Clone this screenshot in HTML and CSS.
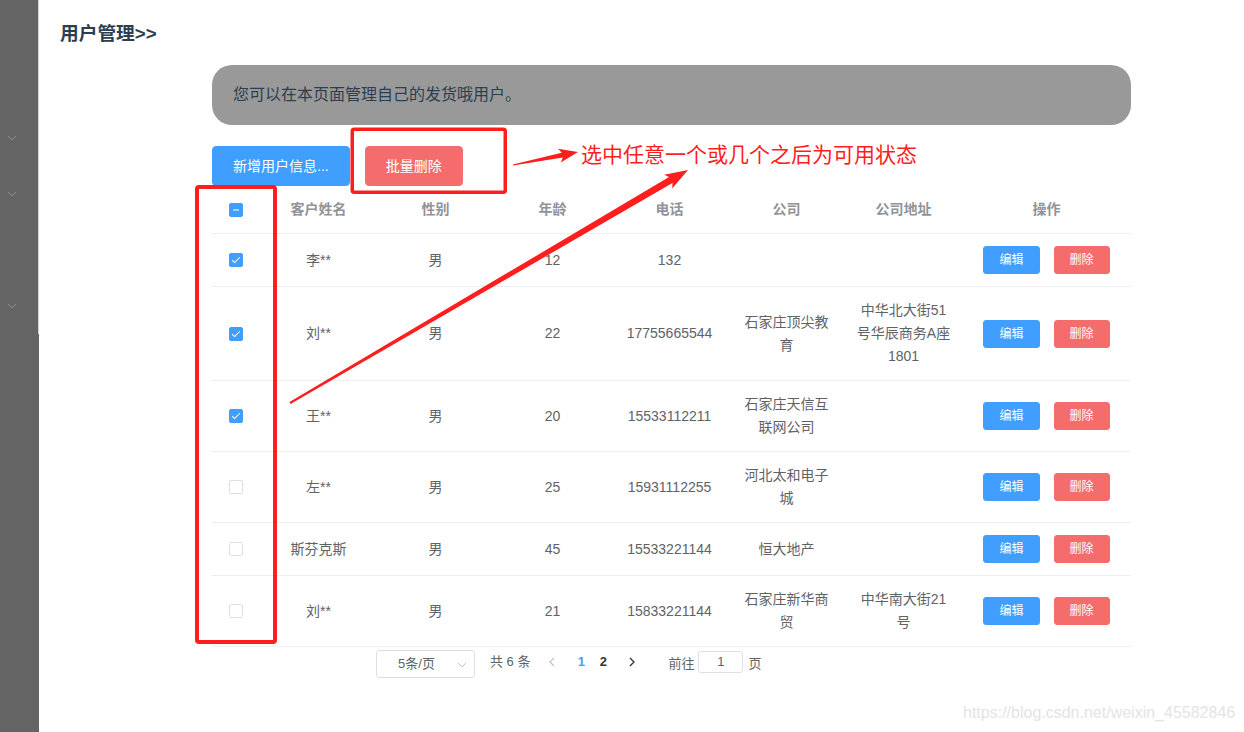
FILE: index.html
```html
<!DOCTYPE html>
<html lang="zh-CN">
<head>
<meta charset="utf-8">
<title>用户管理</title>
<link rel="stylesheet" href="styles.css">
</head>
<body>
<div class="app">
  <aside class="aside">
    <div class="menu">
      <div class="menu-logo"></div>
      <div class="menu-item"><svg class="chev" viewBox="0 0 10 6"><polyline points="1,1 5,5 9,1"/></svg></div>
      <div class="menu-item"><svg class="chev" viewBox="0 0 10 6"><polyline points="1,1 5,5 9,1"/></svg></div>
      <div class="menu-item"></div>
      <div class="menu-item"><svg class="chev" viewBox="0 0 10 6"><polyline points="1,1 5,5 9,1"/></svg></div>
    </div>
  </aside>
  <main class="main">
    <h3 class="title">用户管理&gt;&gt;</h3>
    <div class="content">
      <div class="notice">您可以在本页面管理自己的发货哦用户。</div>
      <div class="toolbar">
        <button class="btn btn-primary">新增用户信息...</button>
        <button class="btn btn-danger">批量删除</button>
      </div>
      <table class="table">
        <colgroup>
          <col class="c-sel"><col class="c-std"><col class="c-std"><col class="c-std"><col class="c-std"><col class="c-std"><col class="c-std"><col class="c-op">
        </colgroup>
        <thead>
          <tr>
            <th><div class="cell cell-cb"><span class="cb indeterminate"></span></div></th>
            <th><div class="cell">客户姓名</div></th>
            <th><div class="cell">性别</div></th>
            <th><div class="cell">年龄</div></th>
            <th><div class="cell">电话</div></th>
            <th><div class="cell">公司</div></th>
            <th><div class="cell">公司地址</div></th>
            <th><div class="cell">操作</div></th>
          </tr>
        </thead>
        <tbody>
          <tr>
            <td><div class="cell cell-cb"><span class="cb checked"></span></div></td>
            <td><div class="cell">李**</div></td>
            <td><div class="cell">男</div></td>
            <td><div class="cell">12</div></td>
            <td><div class="cell">132</div></td>
            <td><div class="cell"></div></td>
            <td><div class="cell"></div></td>
            <td><div class="cell ops"><button class="btn btn-mini btn-primary">编辑</button><button class="btn btn-mini btn-danger">删除</button></div></td>
          </tr>
          <tr>
            <td><div class="cell cell-cb"><span class="cb checked"></span></div></td>
            <td><div class="cell">刘**</div></td>
            <td><div class="cell">男</div></td>
            <td><div class="cell">22</div></td>
            <td><div class="cell">17755665544</div></td>
            <td><div class="cell">石家庄顶尖教育</div></td>
            <td><div class="cell">中华北大街51号华辰商务A座1801</div></td>
            <td><div class="cell ops"><button class="btn btn-mini btn-primary">编辑</button><button class="btn btn-mini btn-danger">删除</button></div></td>
          </tr>
          <tr>
            <td><div class="cell cell-cb"><span class="cb checked"></span></div></td>
            <td><div class="cell">王**</div></td>
            <td><div class="cell">男</div></td>
            <td><div class="cell">20</div></td>
            <td><div class="cell">15533112211</div></td>
            <td><div class="cell">石家庄天信互联网公司</div></td>
            <td><div class="cell"></div></td>
            <td><div class="cell ops"><button class="btn btn-mini btn-primary">编辑</button><button class="btn btn-mini btn-danger">删除</button></div></td>
          </tr>
          <tr>
            <td><div class="cell cell-cb"><span class="cb"></span></div></td>
            <td><div class="cell">左**</div></td>
            <td><div class="cell">男</div></td>
            <td><div class="cell">25</div></td>
            <td><div class="cell">15931112255</div></td>
            <td><div class="cell">河北太和电子城</div></td>
            <td><div class="cell"></div></td>
            <td><div class="cell ops"><button class="btn btn-mini btn-primary">编辑</button><button class="btn btn-mini btn-danger">删除</button></div></td>
          </tr>
          <tr>
            <td><div class="cell cell-cb"><span class="cb"></span></div></td>
            <td><div class="cell">斯芬克斯</div></td>
            <td><div class="cell">男</div></td>
            <td><div class="cell">45</div></td>
            <td><div class="cell">15533221144</div></td>
            <td><div class="cell">恒大地产</div></td>
            <td><div class="cell"></div></td>
            <td><div class="cell ops"><button class="btn btn-mini btn-primary">编辑</button><button class="btn btn-mini btn-danger">删除</button></div></td>
          </tr>
          <tr>
            <td><div class="cell cell-cb"><span class="cb"></span></div></td>
            <td><div class="cell">刘**</div></td>
            <td><div class="cell">男</div></td>
            <td><div class="cell">21</div></td>
            <td><div class="cell">15833221144</div></td>
            <td><div class="cell">石家庄新华商贸</div></td>
            <td><div class="cell">中华南大街21号</div></td>
            <td><div class="cell ops"><button class="btn btn-mini btn-primary">编辑</button><button class="btn btn-mini btn-danger">删除</button></div></td>
          </tr>
        </tbody>
      </table>
      <div class="pagination">
        <div class="pg-sizes">5条/页<svg class="pg-arrow" viewBox="0 0 10 6"><polyline points="1,1 5,5 9,1"/></svg></div>
        <span class="pg-total">共 6 条</span>
        <span class="pg-btn pg-prev"><svg viewBox="0 0 6 10"><polyline points="5,1 1,5 5,9"/></svg></span>
        <span class="pg-num active">1</span>
        <span class="pg-num">2</span>
        <span class="pg-btn pg-next"><svg viewBox="0 0 6 10"><polyline points="1,1 5,5 1,9"/></svg></span>
        <span class="pg-jump">前往<span class="pg-input">1</span>页</span>
      </div>
    </div>
  </main>

  <svg class="overlay" width="1244" height="732" viewBox="0 0 1244 732">
    <rect x="352.25" y="129.25" width="153" height="63" rx="2" fill="none" stroke="#ff1e1e" stroke-width="3.5"/>
    <rect x="197" y="187" width="78" height="455" rx="2" fill="none" stroke="#ff1e1e" stroke-width="4"/>
    <polygon points="513,165.6 562.8,157.6 560.8,162.6 578,152 558.0,148.8 561.8,152.7 512.8,164.4" fill="#ff1e1e"/>
    <polygon points="290.5,403.9 672.5,183.1 672.2,188.5 688,170 664.2,174.7 669.0,177.1 289.5,402.1" fill="#ff1e1e"/>
  </svg>
  <div class="note">选中任意一个或几个之后为可用状态</div>
  <div class="watermark">https://blog.csdn.net/weixin_45582846</div>
</div>
</body>
</html>
```

FILE: styles.css
```css
* { box-sizing: border-box; }
html, body { margin: 0; padding: 0; }
body {
  font-family: "Liberation Sans", "Noto Sans CJK SC", sans-serif;
  background: #fff;
  color: #606266;
  width: 1244px;
  height: 732px;
  overflow: hidden;
}
.app { position: relative; display: flex; height: 732px; }

/* sidebar */
.aside { width: 39px; flex-shrink: 0; background: #646464; }
.menu { width: 39px; border-right: 1px solid #d2d2d2; }
.menu-logo { height: 110px; }
.menu-item { height: 56px; display: flex; align-items: center; padding-left: 7px; }
.chev { width: 10px; height: 6px; fill: none; stroke: #8f8f8f; stroke-width: 1; }

/* main */
.main { flex: 1; padding: 21px 0 0 21px; }
.title {
  margin: 0;
  font-size: 18.72px;
  line-height: 26px;
  font-weight: bold;
  color: #2c3e50;
}
.content { width: 919px; margin: 18px 0 0 152px; }
.notice {
  height: 60px;
  line-height: 60px;
  padding: 0 21px;
  background: #999999;
  border-radius: 20px;
  font-size: 16px;
  color: #2c3e50;
}
.toolbar { display: flex; gap: 15px; margin-top: 21px; }

.btn {
  font-family: inherit;
  font-size: 14px;
  font-weight: 400;
  line-height: 14px;
  padding: 12px 20px;
  border-radius: 4px;
  color: #fff;
  border: 1px solid transparent;
  cursor: pointer;
}
.btn-primary { background: #409eff; border-color: #409eff; }
.btn-danger { background: #f56c6c; border-color: #f56c6c; }
.btn-mini { padding: 7px 15px; font-size: 12px; line-height: 12px; border-radius: 3px; }

/* table */
.table {
  width: 919px;
  table-layout: fixed;
  border-collapse: collapse;
  font-size: 14px;
}
.c-sel { width: 48px; }
.c-std { width: 117px; }
.c-op { width: 169px; }
.table th, .table td {
  padding: 12px 0;
  border-bottom: 1px solid #ebeef5;
  text-align: center;
  vertical-align: middle;
}
.table th { color: #909399; font-weight: bold; }
.table td { color: #606266; }
.cell { padding: 0 10px; line-height: 23px; }
.cell-cb { display: flex; justify-content: center; align-items: center; height: 23px; }
.ops { display: flex; justify-content: center; gap: 14px; }

.cb {
  display: block;
  width: 14px;
  height: 14px;
  border: 1px solid #dcdfe6;
  border-radius: 2px;
  background: #fff;
  position: relative;
}
.cb.checked, .cb.indeterminate { background: #409eff; border-color: #409eff; }
.cb.checked::after {
  content: "";
  position: absolute;
  left: 4px;
  top: 1px;
  width: 3px;
  height: 7px;
  border: 1px solid #fff;
  border-left: 0;
  border-top: 0;
  transform: rotate(45deg);
  box-sizing: content-box;
}
.cb.indeterminate::before {
  content: "";
  position: absolute;
  left: 0;
  right: 0;
  top: 5px;
  height: 2px;
  background: #fff;
  transform: scale(.5);
}

/* pagination */
.pagination {
  display: flex;
  align-items: flex-start;
  margin: 3px 0 0 164px;
  font-size: 13px;
  color: #606266;
  height: 28px;
}
.pg-sizes {
  position: relative;
  width: 99px;
  height: 28px;
  border: 1px solid #dcdfe6;
  border-radius: 3px;
  line-height: 25px;
  text-align: center;
  padding-right: 18px;
  margin-right: 15px;
}
.pg-arrow {
  position: absolute;
  right: 7px;
  top: 11px;
  width: 10px;
  height: 6px;
  fill: none;
  stroke: #c0c4cc;
  stroke-width: 1;
}
.pg-total { margin-right: 10px; line-height: 24px; }
.pg-btn { width: 24px; height: 24px; display: flex; align-items: center; justify-content: center; }
.pg-btn svg { width: 6px; height: 10px; fill: none; stroke-width: 1.3; }
.pg-prev { margin-right: 6px; }
.pg-prev svg { stroke: #c0c4cc; }
.pg-next { margin-left: 6px; }
.pg-next svg { stroke: #303133; }
.pg-num { width: 22px; text-align: center; font-weight: bold; color: #303133; line-height: 24px; }
.pg-num.active { color: #409eff; }
.pg-jump { margin-left: 24px; display: flex; align-items: center; height: 24px; }
.pg-input {
  width: 45px;
  height: 22px;
  margin: 0 5px 0 4px;
  border: 1px solid #dcdfe6;
  border-radius: 3px;
  text-align: center;
  line-height: 20px;
}

/* annotations over the screenshot */
.overlay { position: absolute; left: 0; top: 0; pointer-events: none; }
.note {
  position: absolute;
  left: 581px;
  top: 143px;
  font-family: "Noto Sans CJK SC", sans-serif;
  font-size: 21px;
  line-height: 21px;
  color: #ff1e1e;
  white-space: nowrap;
}
.watermark {
  position: absolute;
  left: 963px;
  top: 704px;
  font-size: 16px;
  line-height: 18px;
  color: #e4e4e4;
  white-space: nowrap;
}
```
